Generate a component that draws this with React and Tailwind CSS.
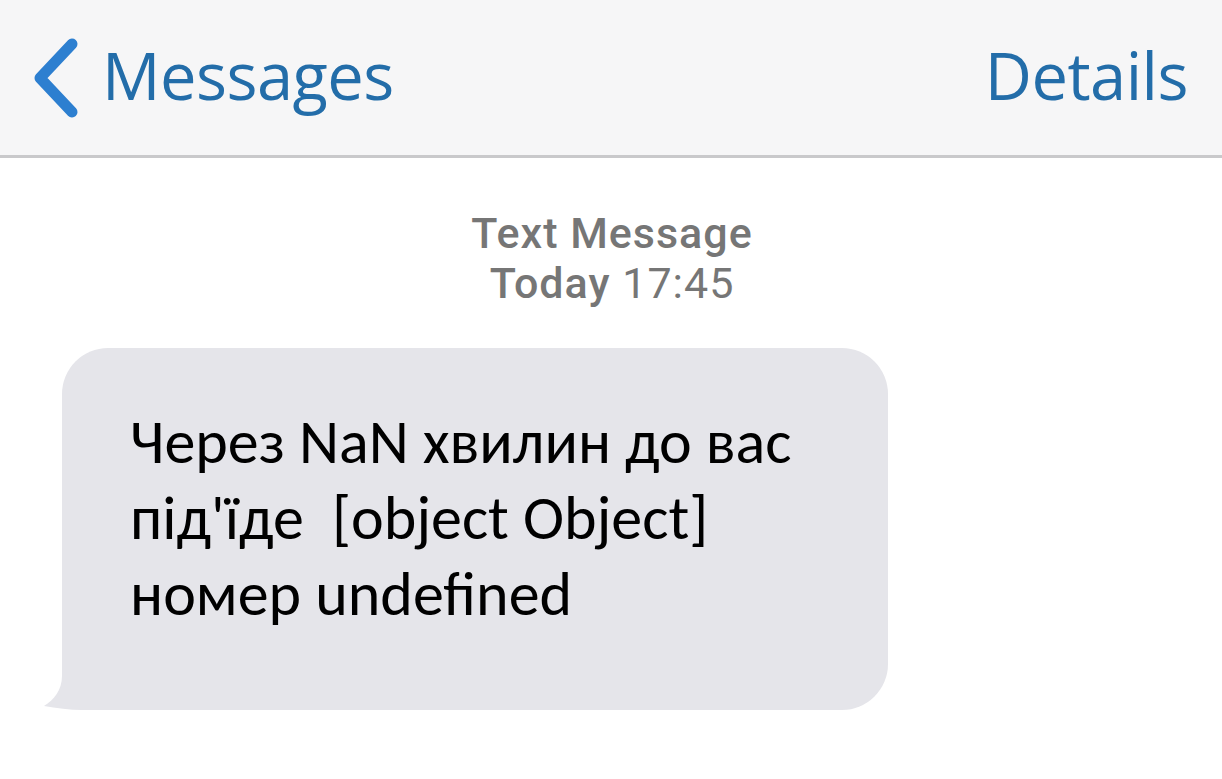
import React from 'react';

const Chevron = () => (
  <svg width="50" height="84" viewBox="0 0 50 84" className="shrink-0">
    <path d="M42 8 L10 42 L42 76" fill="none" stroke="#2d7fd0" strokeWidth="11" strokeLinecap="round" strokeLinejoin="round" />
  </svg>
);

export default function App() {
  return (
    <div className="w-[1222px] h-[779px] bg-white overflow-hidden font-['Liberation_Sans',sans-serif]">
      {/* Navigation bar */}
      <div className="h-[158px] bg-[#f6f6f7] border-b-[3px] border-[#c9c9cb] flex items-center justify-between pl-[30px] pr-[34px]">
        <div className="flex items-center gap-[22px] text-[#236da9]">
          <Chevron />
          <span className="text-[65px] leading-none tracking-[-0.5px] font-['Open_Sans',sans-serif] pb-[4px]">Messages</span>
        </div>
        <span className="text-[65px] leading-none text-[#236da9] tracking-[-0.5px] font-['Open_Sans',sans-serif] pb-[4px]">Details</span>
      </div>

      {/* Timestamp */}
      <div className="flex flex-col items-center pt-[50px] text-[#767676] font-['Roboto',sans-serif] text-[43px] leading-[50px] tracking-[1px] font-medium pl-[2px]">
        <span>Text Message</span>
        <span>Today <span className="font-normal">17:45</span></span>
      </div>

      {/* Bubble */}
      <div className="pl-[62px] pt-[40px]">
        <div className="relative w-[826px] h-[362px] bg-[#e5e5ea] rounded-[46px] pl-[68px] pt-[56px]">
          <p className="text-[62px] leading-[76px] text-black font-['Carlito','Open_Sans',sans-serif] whitespace-pre">
            {"Через NaN хвилин до вас\nпід'їде  [object Object]\nномер undefined"}
          </p>
          <svg className="absolute left-[-20px] bottom-0" width="68" height="48" viewBox="0 0 68 48">
            <path d="M20 0 H68 V48 H40 C28 48 14 46 2 44 C12 38 20 28 20 14 Z" fill="#e5e5ea" />
          </svg>
        </div>
      </div>
    </div>
  );
}
